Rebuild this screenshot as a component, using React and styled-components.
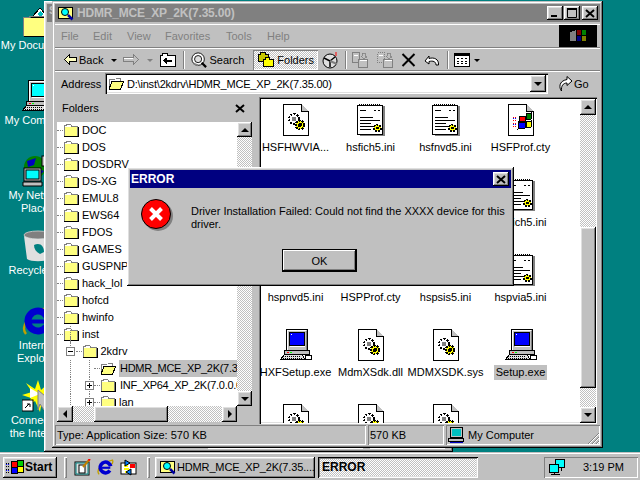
import React from 'react';
import styled, { createGlobalStyle, css } from 'styled-components';

const GlobalStyle = createGlobalStyle`
  html, body {
    margin: 0;
    padding: 0;
    width: 640px;
    height: 480px;
    overflow: hidden;
    background: #008080;
    font-family: "Liberation Sans", Arial, sans-serif;
    font-size: 11px;
    color: #000;
  }
`;

const raised = css`
  background-color: #c0c0c0;
  box-shadow: inset -1px -1px #000, inset 1px 1px #fff, inset -2px -2px #808080, inset 2px 2px #dfdfdf;
`;

const pressed = css`
  box-shadow: inset 1px 1px #000, inset -1px -1px #fff, inset 2px 2px #808080, inset -2px -2px #dfdfdf;
`;

const thinSunken = css`
  box-shadow: inset 1px 1px #808080, inset -1px -1px #fff;
`;

const dither = css`
  background: repeating-conic-gradient(#fff 0 25%, #c0c0c0 0 50%) 0 0 / 2px 2px;
`;

const Screen = styled.div`
  width: 640px;
  height: 480px;
  display: flex;
  flex-direction: column;
  overflow: hidden;
`;

const Desktop = styled.div`
  position: relative;
  height: 452px;
  background: #008080;
  overflow: hidden;
`;

const DesktopIcons = styled.div`
  display: flex;
  flex-direction: column;
  width: 75px;
  padding-top: 5px;
`;

const DesktopItem = styled.div`
  height: 75px;
  display: flex;
  flex-direction: column;
  align-items: center;
  color: #fff;
  text-align: center;
  line-height: 13px;
  svg {
    margin-bottom: 2px;
  }
`;

const BackWindow = styled.div`
  position: absolute;
  left: 44px;
  top: 1px;
  width: 409px;
  height: 451px;
  ${raised}
  padding: 3px;
  box-sizing: border-box;
  display: flex;
  flex-direction: column;
`;

const BackTitle = styled.div`
  height: 18px;
  background: #808080;
  color: #c0c0c0;
  font-weight: bold;
  padding-left: 2px;
`;

const BackStatus = styled.div`
  margin-top: auto;
  height: 4px;
  display: flex;
  padding-left: 161px;
  gap: 7px;
`;

const BackPane = styled.div`
  width: ${p => p.$w}px;
  border-top: 1px solid #000;
  border-bottom: 1px solid #fff;
`;

const Explorer = styled.div`
  position: absolute;
  left: 52px;
  top: 1px;
  width: 551px;
  height: 447px;
  padding: 3px;
  box-sizing: border-box;
  background: #c0c0c0;
  box-shadow: inset -1px -1px #000, inset 1px 1px #c0c0c0, inset -2px -2px #808080, inset 2px 2px #fff;
  display: flex;
  flex-direction: column;
`;

const TitleBar = styled.div`
  height: 18px;
  flex: none;
  display: flex;
  align-items: center;
  background: ${p => (p.$active ? '#000080' : '#808080')};
  color: ${p => (p.$active ? '#fff' : '#c0c0c0')};
  font-weight: bold;
  font-size: 12px;
  padding: 0 2px 0 ${p => (p.$active ? 1 : 3)}px;
  gap: 1px;
`;

const TitleText = styled.span`
  flex: 1;
  white-space: nowrap;
  letter-spacing: ${p => p.$spacing || 0}px;
  padding-left: ${p => p.$pl || 0}px;
`;

const CaptionButton = styled.div`
  ${raised}
  width: 16px;
  height: 14px;
  flex: none;
  margin-left: ${p => p.$ml || 0}px;
  display: flex;
  align-items: center;
  justify-content: center;
  color: #000;
`;

const Band = styled.div`
  height: ${p => p.$h}px;
  flex: none;
  display: flex;
  align-items: center;
  box-sizing: border-box;
  border-top: 1px solid #fff;
  border-bottom: 1px solid #808080;
`;

const MenuBar = styled(Band)`
  margin-top: 2px;
  padding-left: 6px;
`;

const MenuItem = styled.span`
  width: ${p => p.$w}px;
  color: #808080;
`;

const Throbber = styled.div`
  margin-left: auto;
  margin-right: 3px;
  width: 38px;
  height: 22px;
  background: #000;
  display: flex;
  align-items: center;
  justify-content: center;
`;

const ToolBar = styled(Band)`
  padding: 1px 0 0 6px;
`;

const Slot = styled.span`
  display: flex;
  align-items: center;
  flex: none;
  margin-left: ${p => p.$ml || 0}px;
  gap: 2px;
`;

const ToolSep = styled.span`
  width: 2px;
  height: 18px;
  flex: none;
  margin-left: ${p => p.$ml}px;
  box-shadow: inset 1px 0 #808080, inset -1px 0 #fff;
`;

const Caret = styled.span`
  width: 0;
  height: 0;
  flex: none;
  margin-left: ${p => p.$ml}px;
  border-left: 3px solid transparent;
  border-right: 3px solid transparent;
  border-top: 3px solid ${p => p.$color || '#000'};
`;

const FoldersButton = styled.div`
  ${dither}
  margin-left: ${p => p.$ml}px;
  width: 65px;
  height: 20px;
  box-sizing: border-box;
  ${thinSunken}
  flex: none;
  display: flex;
  align-items: center;
  padding-left: 5px;
  gap: 3px;
`;

const AddressBar = styled(Band)`
  padding-left: 6px;
  border-bottom: 0;
`;

const AddressLabel = styled.span`
  width: 44px;
  flex: none;
`;

const AddressField = styled.div`
  width: 443px;
  height: 21px;
  box-sizing: border-box;
  flex: none;
  background: #fff;
  box-shadow: inset 1px 1px #808080, inset 2px 2px #000, inset -1px -1px #fff, inset -2px -2px #dfdfdf;
  display: flex;
  align-items: center;
  padding: 2px 2px 2px 3px;
  gap: 3px;
`;

const AddressText = styled.span`
  flex: 1;
  white-space: nowrap;
  letter-spacing: -0.2px;
`;

const GoButton = styled.div`
  display: flex;
  align-items: center;
  margin-left: 10px;
  gap: 1px;
`;

const Main = styled.div`
  height: 328px;
  flex: none;
  margin-top: 1px;
  display: flex;
`;

const LeftPane = styled.div`
  width: 198px;
  flex: none;
  display: flex;
  flex-direction: column;
  padding: 1px 0 2px 2px;
  box-sizing: border-box;
`;

const PaneHeader = styled.div`
  height: 25px;
  flex: none;
  display: flex;
  align-items: center;
  justify-content: space-between;
  padding: 0 8px 3px 5px;
  box-sizing: border-box;
`;

const TreeArea = styled.div`
  height: 284px;
  flex: none;
  display: flex;
`;

const Tree = styled.div`
  width: 180px;
  flex: none;
  background: #fff;
  overflow: hidden;
`;

const TreeRow = styled.div`
  position: relative;
  height: 17px;
  display: flex;
  align-items: center;
  padding-left: ${p => p.$depth * 18.5}px;
  white-space: nowrap;
`;

const Stub = styled.span`
  width: 6px;
  height: 0;
  flex: none;
  border-top: 1px dotted #808080;
`;

const Guide = styled.span`
  position: absolute;
  left: ${p => p.$x}px;
  top: ${p => (p.$short ? -6 : 0)}px;
  height: ${p => (p.$short ? 15 : 17)}px;
  border-left: 1px dotted #808080;
`;

const Expander = styled.span`
  position: absolute;
  left: ${p => p.$x}px;
  top: 4px;
  width: 7px;
  height: 7px;
  border: 1px solid #808080;
  background:
    linear-gradient(#000, #000) center / 5px 1px no-repeat,
    ${p => (p.$open ? 'none' : 'linear-gradient(#000, #000) center / 1px 5px no-repeat')},
    #fff;
`;

const TreeLabel = styled.span`
  margin-left: ${p => (p.$tight ? 3 : 2)}px;
  padding: 0 1px;
  line-height: 17px;
  flex: ${p => (p.$selected ? 1 : 'none')};
  height: 17px;
  overflow: hidden;
  letter-spacing: ${p => (p.$tight ? -0.3 : 0)}px;
  background: ${p => (p.$selected ? '#c0c0c0' : 'transparent')};
`;

const VScroll = styled.div`
  width: ${p => p.$w || 15}px;
  flex: none;
  display: flex;
  flex-direction: column;
`;

const ScrollButton = styled.div`
  ${raised}
  width: ${p => p.$w || 15}px;
  height: ${p => p.$h || 15}px;
  flex: none;
  display: flex;
  align-items: center;
  justify-content: center;
`;

const Arrow = styled.span`
  width: 0;
  height: 0;
  ${p => p.$dir === 'up' && 'border-left: 4px solid transparent; border-right: 4px solid transparent; border-bottom: 4px solid #000;'}
  ${p => p.$dir === 'down' && 'border-left: 4px solid transparent; border-right: 4px solid transparent; border-top: 4px solid #000;'}
  ${p => p.$dir === 'left' && 'border-top: 4px solid transparent; border-bottom: 4px solid transparent; border-right: 4px solid #000;'}
  ${p => p.$dir === 'right' && 'border-top: 4px solid transparent; border-bottom: 4px solid transparent; border-left: 4px solid #000;'}
`;

const Track = styled.div`
  ${dither}
  flex: ${p => (p.$size ? `0 0 ${p.$size}px` : 1)};
`;

const Thumb = styled.div`
  ${raised}
  flex: 0 0 ${p => p.$size}px;
`;

const HScroll = styled.div`
  height: 16px;
  width: 180px;
  flex: none;
  display: flex;
`;

const RightPane = styled.div`
  width: 338px;
  height: 327px;
  margin: 1px 0 0 6px;
  flex: none;
  display: flex;
  padding: 2px 1px 1px 2px;
  box-sizing: border-box;
  background: #fff;
  box-shadow: inset 1px 1px #808080, inset 2px 2px #000, inset -1px -1px #fff, inset -2px -2px #dfdfdf;
`;

const FileArea = styled.div`
  flex: 1;
  overflow: hidden;
`;

const FileGrid = styled.div`
  display: grid;
  grid-template-columns: repeat(4, 75px);
  grid-auto-rows: 75px;
  margin-left: -3px;
  padding-top: 5px;
`;

const FileCell = styled.div`
  display: flex;
  flex-direction: column;
  align-items: center;
`;

const FileIconBox = styled.div`
  height: 32px;
  display: flex;
  justify-content: center;
`;

const FileLabel = styled.span`
  margin-top: 4px;
  padding: 0 2px;
  line-height: 15px;
  white-space: nowrap;
  background: ${p => (p.$selected ? '#c0c0c0' : 'transparent')};
`;

const StatusBar = styled.div`
  height: 20px;
  flex: none;
  margin-top: 1px;
  display: flex;
  gap: 2px;
`;

const StatusPane = styled.div`
  ${thinSunken}
  width: ${p => p.$w}px;
  flex: ${p => (p.$grow ? 1 : 'none')};
  box-sizing: border-box;
  display: flex;
  align-items: center;
  padding-left: ${p => p.$pl || 2}px;
  gap: 4px;
  position: relative;
  white-space: nowrap;
`;

const Grip = styled.svg`
  position: absolute;
  right: 0;
  bottom: 0;
`;

const Dialog = styled.div`
  position: absolute;
  left: 127px;
  top: 167px;
  width: 387px;
  height: 119px;
  padding: 3px;
  box-sizing: border-box;
  ${raised}
  display: flex;
  flex-direction: column;
`;

const DialogBody = styled.div`
  display: flex;
  padding: 11px 0 0 11px;
  height: 61px;
  box-sizing: border-box;
`;

const DialogText = styled.div`
  width: 318px;
  margin: 6px 0 0 18px;
  line-height: 13px;
`;

const DialogActions = styled.div`
  display: flex;
  justify-content: center;
  margin-left: -2px;
`;

const OkButton = styled.div`
  width: 75px;
  height: 23px;
  background: #c0c0c0;
  outline: 1px solid #000;
  outline-offset: -1px;
  box-shadow: inset -2px -2px #000, inset 2px 2px #fff, inset -3px -3px #808080;
  display: flex;
  align-items: center;
  justify-content: center;
`;

const Taskbar = styled.div`
  height: 28px;
  flex: none;
  background: #c0c0c0;
  border-top: 1px solid #c0c0c0;
  box-shadow: inset 0 1px #fff;
  box-sizing: border-box;
  display: flex;
  align-items: flex-start;
  padding: 4px 2px 0 3px;
`;

const StartButton = styled.div`
  ${raised}
  width: 54px;
  height: 21px;
  flex: none;
  display: flex;
  align-items: center;
  padding: 0 0 1px 2px;
  box-sizing: border-box;
  font-weight: bold;
  font-size: 12px;
`;

const TaskSep = styled.span`
  width: 3px;
  height: 21px;
  flex: none;
  margin-left: ${p => p.$ml}px;
  box-shadow: inset 1px 1px #fff, inset -1px -1px #808080;
`;

const QuickIcon = styled.span`
  display: flex;
  flex: none;
  margin: 2px 0 0 ${p => p.$ml}px;
`;

const TaskButton = styled.div`
  ${p => (p.$active ? dither : raised)}
  ${p => p.$active && pressed}
  width: 160px;
  height: 21px;
  flex: none;
  margin-left: ${p => p.$ml}px;
  box-sizing: border-box;
  display: flex;
  align-items: center;
  padding: 0 0 1px ${p => (p.$active ? 4 : 5)}px;
  gap: 1px;
  font-size: ${p => (p.$active ? 12 : 11)}px;
  font-weight: ${p => (p.$active ? 'bold' : 'normal')};
  letter-spacing: ${p => (p.$active ? 0 : -0.15)}px;
  white-space: nowrap;
`;

const Tray = styled.div`
  ${thinSunken}
  width: 94px;
  height: 21px;
  flex: none;
  margin-left: auto;
  display: flex;
  align-items: center;
  padding: 0 0 1px 5px;
  box-sizing: border-box;
`;

const Clock = styled.span`
  margin-left: 18px;
`;

const Px = styled.svg`
  display: block;
  flex: none;
  shape-rendering: crispEdges;
`;

const Icon = ({ w, h, children }) => (
  <Px width={w} height={h} viewBox={`0 0 ${w} ${h}`}>{children}</Px>
);

const folderYellow = '#ffff80';

const FolderIcon = () => (
  <Icon w={16} h={15}>
    <rect x="2" y="4" width="12" height="9" fill={folderYellow} />
    <path d="M1.5 13V2.5H3V1.5H7.5L8.5 3H14M14.5 3V13" fill="none" stroke="#808080" />
    <path d="M1 13.5H15.5M15.5 4V13" stroke="#000" fill="none" />
    <rect x="2" y="3" width="5" height="1" fill="#fff" />
  </Icon>
);

const OpenFolderIcon = () => (
  <Icon w={16} h={15}>
    <path d="M2 3H12V6H2Z" fill="#fff" />
    <path d="M4 6H15L12 13H1Z" fill={folderYellow} />
    <path d="M1.5 13V3H7M7.5 2.5H12.5V5" fill="none" stroke="#808080" />
    <path d="M1 13.5H12.5L15.5 5.5H4L1 13" fill="none" stroke="#000" />
  </Icon>
);

const Gears = ({ x = 0, y = 0 }) => (
  <g transform={`translate(${x} ${y})`}>
    <circle cx="6" cy="6" r="5" fill="#fff" stroke="#000" strokeWidth="2" strokeDasharray="2 1.2" />
    <circle cx="6" cy="6" r="2.5" fill="#808080" />
    <circle cx="12" cy="12" r="4.5" fill="#ffff00" stroke="#000" strokeWidth="2" strokeDasharray="2 1.2" />
    <circle cx="12" cy="12" r="2" fill="#000" />
  </g>
);

const GearFileIcon = () => (
  <Icon w={26} h={32}>
    <path d="M.5 .5H18.5L25.5 7.5V31.5H.5Z" fill="#fff" stroke="#000" />
    <path d="M18.5 .5V7.5H25.5" fill="#c0c0c0" stroke="#000" />
    <Gears x={5} y={9} />
  </Icon>
);

const IniIcon = () => (
  <Icon w={28} h={32}>
    <rect x="3" y="2" width="25" height="30" fill="#808080" />
    <rect x=".5" y="1.5" width="25" height="29" fill="#fff" stroke="#000" />
    <path d="M2 .5H24" stroke="#000" strokeDasharray="1 1" />
    <path d="M3 6.5H9M17 6.5H19M21 6.5H23M3 13.5H16M3 16.5H23M3 19.5H14M3 22.5H17M3 25.5H14" stroke="#000" />
    <circle cx="20.5" cy="24" r="3.5" fill="#ffff00" stroke="#000" strokeWidth="2" strokeDasharray="2 1" />
    <circle cx="20.5" cy="24" r="1.2" fill="#000" />
  </Icon>
);

const CtyIcon = () => (
  <Icon w={26} h={32}>
    <path d="M.5 .5H18.5L25.5 7.5V31.5H.5Z" fill="#fff" stroke="#000" />
    <path d="M18.5 .5V7.5H25.5" fill="#c0c0c0" stroke="#000" />
    <path d="M12 12H17V17H11Z" fill="#f00" stroke="#000" />
    <path d="M18 10L23 9V15L18 16Z" fill="#008000" stroke="#000" />
    <path d="M11 18H17V24L10 25Z" fill="#00f" stroke="#000" />
    <path d="M18 18L23 17V23L18 24Z" fill="#ff0" stroke="#000" />
    <path d="M5 13H9M5 16H9M5 19H9M5 22H9" stroke="#f00" strokeDasharray="1 1" />
    <path d="M5 14H9M5 20H9" stroke="#00f" strokeDasharray="1 1" />
  </Icon>
);

const ComputerIcon = ({ screen = '#0000ff' }) => (
  <Icon w={32} h={32}>
    <rect x="6.5" y=".5" width="21" height="21" fill="#c0c0c0" stroke="#000" />
    <path d="M7.5 20.5V1.5H26" stroke="#fff" fill="none" />
    <path d="M26.5 2V21" stroke="#808080" />
    <rect x="9.5" y="3.5" width="15" height="13" fill={screen} stroke="#000" />
    <path d="M10 17.5H25" stroke="#fff" />
    <rect x="11" y="5" width="1" height="1" fill="#fff" />
    <path d="M4.5 21.5H29.5V25.5H4.5Z" fill="#c0c0c0" stroke="#000" />
    <rect x="7" y="23" width="2" height="1" fill="#f00" />
    <rect x="10" y="23" width="2" height="1" fill="#0f0" />
    <path d="M.5 30.5L4.5 25.5H22.5L24.5 30.5Z" fill="#dfdfdf" stroke="#000" />
    <path d="M5 27.5H21M3 29.5H22" stroke="#000" strokeDasharray="1 1" />
    <rect x="25.5" y="26.5" width="6" height="4" fill="#fff" stroke="#000" />
  </Icon>
);

const BackIcon = () => (
  <Icon w={13} h={12}>
    <path d="M5.5 .5L.5 5.5L5.5 10.5V7.5H12.5V3.5H5.5Z" fill="#ffffc0" stroke="#000" />
  </Icon>
);

const ForwardIcon = () => (
  <Icon w={16} h={12}>
    <path d="M10.5 .5L15.5 5.5L10.5 10.5V7.5H.5V3.5H10.5Z" fill="#c0c0c0" stroke="#808080" />
    <path d="M1 4.5H10" stroke="#fff" />
  </Icon>
);

const UpIcon = () => (
  <Icon w={16} h={14}>
    <path d="M.5 13.5V2.5H2V.5H7V2.5H15.5V13.5Z" fill="#fff" stroke="#000" />
    <path d="M3 7.5L6.5 4.5V6.5H12V8.5H6.5V10.5Z" fill="#000" />
  </Icon>
);

const SearchIcon = () => (
  <svg width="16" height="16" viewBox="0 0 18 18">
    <circle cx="8" cy="8" r="7" fill="#fff" stroke="#000" />
    <circle cx="8" cy="8" r="4" fill="#dfdfdf" stroke="#000" />
    <path d="M12 12L17 17" stroke="#000" strokeWidth="2.5" />
    <path d="M3 13L8 15" stroke="#808080" strokeWidth="2" />
  </svg>
);

const FoldersToolIcon = () => (
  <Icon w={16} h={16}>
    <path d="M.5 2.5H2V.5H7V2.5H10.5V9.5H.5Z" fill="#c8c800" stroke="#000" />
    <path d="M5.5 7.5H7V5.5H11V7.5H15.5V14.5H5.5Z" fill="#ffff00" stroke="#000" />
  </Icon>
);

const HistoryIcon = () => (
  <svg width="17" height="17" viewBox="0 0 17 17">
    <circle cx="8" cy="9" r="7" fill="#dfdfdf" stroke="#000" />
    <path d="M8 9L2 6M8 9L13 5M8 9L8 15" stroke="#000" strokeWidth="1.5" />
    <path d="M14 0V4" stroke="#f00" />
    <path d="M8 9L15 12" stroke="#808080" strokeWidth="2" />
  </svg>
);

const DocPairIcon = ({ flip }) => (
  <Icon w={16} h={16}>
    <path d="M.5 .5H7.5V10.5H.5Z" fill="#c0c0c0" stroke="#808080" strokeDasharray={flip ? '1 1' : '0'} />
    <path d="M6.5 7.5H15.5V15.5H6.5Z" fill="#c0c0c0" stroke="#808080" />
    <path d="M7.5 8.5H15M2 3H6" stroke="#fff" />
    <path d="M10 1H13V4H15L11.5 6.5L9 4H10Z" fill="#c0c0c0" stroke="#808080" strokeWidth=".8" />
  </Icon>
);

const DeleteIcon = () => (
  <svg width="15" height="14" viewBox="0 0 15 14">
    <path d="M1.5 1L13.5 13M13.5 1L1.5 13" stroke="#000" strokeWidth="2" />
  </svg>
);

const UndoIcon = () => (
  <svg width="16" height="12" viewBox="0 0 16 12">
    <path d="M1 7L5 2V4.5C10 3 15 5 14.5 11H12C12 7.5 9 6.5 5 7.5V10Z" fill="#fff" stroke="#000" />
  </svg>
);

const ViewsIcon = () => (
  <Icon w={16} h={14}>
    <rect x=".5" y=".5" width="15" height="13" fill="#fff" stroke="#000" />
    <rect x="1" y="1" width="14" height="2" fill="#000" />
    <path d="M3 5.5H5M7 5.5H9M11 5.5H13M3 8H5M7 8H9M11 8H13M3 10.5H5M7 10.5H9M11 10.5H13" stroke="#000" />
  </Icon>
);

const GoIcon = () => (
  <svg width="15" height="16" viewBox="0 0 15 16">
    <path d="M9 .5L14 5L9 9.5V7C5 7 3 10 3.5 15C1 12 .5 5 9 3.5Z" fill="#fff" stroke="#000" />
  </svg>
);

const SearchFolderIcon = () => (
  <Icon w={16} h={16}>
    <path d="M.5 2.5H14.5V13.5H.5Z" fill={folderYellow} stroke="#000" />
    <circle cx="7" cy="7" r="3.5" fill="#00ffff" stroke="#000" shapeRendering="auto" />
    <path d="M10 10L14.5 14.5" stroke="#0000a0" strokeWidth="2.5" shapeRendering="auto" />
  </Icon>
);

const ThrobberFlag = () => (
  <Icon w={17} h={14}>
    <path d="M0 3L6 1V12L0 12Z" fill="#808080" />
    <rect x="7" y="1" width="4" height="5" fill="#800000" />
    <rect x="12" y="1" width="4" height="5" fill="#008000" />
    <rect x="7" y="7" width="4" height="5" fill="#000080" />
    <rect x="12" y="7" width="4" height="5" fill="#808000" />
  </Icon>
);

const ErrorIcon = () => (
  <svg width="32" height="32" viewBox="0 0 32 32">
    <circle cx="17" cy="17" r="15" fill="#808080" />
    <circle cx="15" cy="15" r="14.5" fill="#ff0000" stroke="#000" />
    <path d="M9.5 9.5L20.5 20.5M20.5 9.5L9.5 20.5" stroke="#fff" strokeWidth="4" />
  </svg>
);

const WinFlag = () => (
  <Icon w={20} h={16}>
    <path d="M1 4H5M1 7H5M1 10H5M1 13H5" stroke="#000" strokeDasharray="1 1" />
    <path d="M1 5H5M1 11H5" stroke="#00f" strokeDasharray="1 1" />
    <path d="M6 2H12V8H6Z" fill="#f00" stroke="#000" />
    <path d="M12 1H18V7H12Z" fill="#0c0" stroke="#000" />
    <path d="M6 8H12V14H6Z" fill="#00f" stroke="#000" />
    <path d="M12 7H18V13H12Z" fill="#ff0" stroke="#000" />
  </Icon>
);

const ShowDesktopIcon = () => (
  <svg width="17" height="17" viewBox="0 0 17 17">
    <rect x="1" y="3" width="14" height="13" fill="#fff" stroke="#000" />
    <rect x="2" y="4" width="12" height="11" fill="#dfdfdf" stroke="#008080" />
    <rect x="5" y="6" width="6" height="8" fill="#fff" stroke="#000" />
    <path d="M9 8L15 1" stroke="#c08000" strokeWidth="2" />
    <path d="M14.5 1.5L16 0" stroke="#f00" strokeWidth="2" />
  </svg>
);

const IeIcon = ({ size = 17 }) => (
  <svg width={size} height={size} viewBox="0 0 32 32">
    <path d="M4 29C-2 22 6 7 29 2C31 6 29 9 26 11" fill="none" stroke="#c0a000" strokeWidth="2.5" />
    <circle cx="16" cy="16" r="10" fill="none" stroke="#0000d0" strokeWidth="7" strokeDasharray="53 10" transform="rotate(35 16 16)" />
    <rect x="9" y="14.5" width="16" height="4" fill="#0000d0" />
  </svg>
);

const ChannelIcon = () => (
  <svg width="17" height="17" viewBox="0 0 17 17">
    <rect x="1" y="4" width="15" height="11" fill="#fff" stroke="#000" />
    <rect x="10" y="5" width="5" height="4" fill="#f00" />
    <path d="M4 7H8M4 10H9M5 13H11" stroke="#ff0" strokeWidth="2" />
    <path d="M5 1L10 4L5 7Z" fill="#0080ff" stroke="#000" />
    <path d="M11 16L6 13L11 10Z" fill="#0080ff" stroke="#000" />
  </svg>
);

const TrayNetIcon = () => (
  <Icon w={16} h={16}>
    <rect x="6.5" y=".5" width="9" height="8" fill="#00ffff" stroke="#000" />
    <rect x=".5" y="5.5" width="9" height="8" fill="#00ffff" stroke="#000" />
    <path d="M2 15.5H11M5 14V15M12 9V12" stroke="#000" />
  </Icon>
);

const MyComputerSmall = () => (
  <Icon w={16} h={16}>
    <rect x="2.5" y=".5" width="12" height="10" fill="#c0c0c0" stroke="#000" />
    <rect x="4" y="2" width="9" height="7" fill="#00c0c0" />
    <rect x=".5" y="11.5" width="15" height="3" fill="#c0c0c0" stroke="#000" />
    <path d="M2 15.5H15" stroke="#0000c0" />
  </Icon>
);

const MyDocsIcon = () => (
  <Icon w={32} h={32}>
    <path d="M10 12L18 3L26 12Z" fill="#fff" stroke="#000" />
    <path d="M15 9L18 6L21 9L18 12Z" fill="#00c0c0" />
    <rect x="2" y="13" width="30" height="18" fill={folderYellow} />
    <path d="M1.5 31V12.5H7L9 11H32" fill="none" stroke="#808080" />
    <path d="M2 31.5H32" stroke="#000" />
  </Icon>
);

const NetworkIcon = () => (
  <svg width="32" height="32" viewBox="0 0 32 32">
    <circle cx="13" cy="12" r="11" fill="#008000" />
    <path d="M5 6L14 3L12 10L6 12ZM16 14L22 16L16 22Z" fill="#0000c0" />
    <rect x="20" y="1" width="10" height="10" fill="#c0c0c0" stroke="#000" />
    <rect x="2" y="13" width="17" height="13" fill="#c0c0c0" stroke="#000" />
    <rect x="4" y="15" width="13" height="9" fill="#00ffff" stroke="#000" />
    <path d="M1 27H20V31H1Z" fill="#c0c0c0" stroke="#000" />
  </svg>
);

const RecycleIcon = () => (
  <svg width="32" height="32" viewBox="0 0 32 32">
    <ellipse cx="16" cy="5" rx="14" ry="4" fill="#808080" stroke="#c0c0c0" />
    <path d="M2 6L5 29C9 32 23 32 27 29L30 6C24 10 8 10 2 6Z" fill="#dfdfdf" />
    <path d="M12 15C18 12 22 16 22 22L18 24C14 22 12 19 12 15Z" fill="#008080" />
  </svg>
);

const ConnectIcon = () => (
  <svg width="32" height="32" viewBox="0 0 32 32">
    <path d="M16 0L19 10L28 2L23 12L32 14L23 17L30 26L20 21L18 32L13 21L3 28L9 18L0 15L10 12L4 3L13 9Z" fill="#ffff00" />
    <path d="M8 8L18 14L8 18Z" fill="#fff" />
    <path d="M16 10L30 22L24 24L28 30H22L18 24L16 30Z" fill="#c0c0c0" stroke="#808080" />
    <rect x="0" y="20" width="11" height="11" fill="#fff" stroke="#000" />
    <path d="M3 28L7 24M5 24H8V27" stroke="#000" fill="none" />
  </svg>
);

const desktopItems = [
  { icon: <MyDocsIcon />, lines: ['My Documents'] },
  { icon: <ComputerIcon screen="#00ffff" />, lines: ['My Computer'] },
  { icon: <NetworkIcon />, lines: ['My Network', 'Places'] },
  { icon: <RecycleIcon />, lines: ['Recycle Bin'] },
  { icon: <IeIcon size={32} />, lines: ['Internet', 'Explorer'] },
  { icon: <ConnectIcon />, lines: ['Connect to', 'the Internet'] },
];

const topFolders = ['DOC', 'DOS', 'DOSDRV', 'DS-XG', 'EMUL8', 'EWS64', 'FDOS', 'GAMES', 'GUSPNP', 'hack_lol', 'hofcd', 'hwinfo', 'inst'];

const files = [
  ['gear', 'HSFHWVIA...'], ['ini', 'hsfich5.ini'], ['ini', 'hsfnvd5.ini'], ['cty', 'HSFProf.cty'],
  ['ini', 'hsfsis5.ini'], ['ini', 'hsfvia5.ini'], ['gear', 'HSPHWVIA...'], ['ini', 'hspich5.ini'],
  ['ini', 'hspnvd5.ini'], ['cty', 'HSPProf.cty'], ['ini', 'hspsis5.ini'], ['ini', 'hspvia5.ini'],
  ['exe', 'HXFSetup.exe'], ['gear', 'MdmXSdk.dll'], ['gear', 'MDMXSDK.sys'], ['exe', 'Setup.exe', true],
  ['gear', 'mdmxsdk.inf'], ['gear', 'mdmxsdk.cat'], ['gear', 'mdmxsdk.vxd'],
];

const fileIcons = {
  gear: <GearFileIcon />,
  ini: <IniIcon />,
  cty: <CtyIcon />,
  exe: <ComputerIcon />,
};

const App = () => (
  <Screen>
    <GlobalStyle />
    <Desktop>
      <DesktopIcons>
        {desktopItems.map(item => (
          <DesktopItem key={item.lines[0]}>
            {item.icon}
            {item.lines.map(line => <span key={line}>{line}</span>)}
          </DesktopItem>
        ))}
      </DesktopIcons>

      <BackWindow>
        <BackTitle>S</BackTitle>
        <BackStatus>
          <BackPane $w={155} />
          <BackPane $w={75} />
        </BackStatus>
      </BackWindow>

      <Explorer>
        <TitleBar>
          <SearchFolderIcon />
          <TitleText $spacing={-0.2} $pl={2}>HDMR_MCE_XP_2K(7.35.00)</TitleText>
          <CaptionButton>
            <svg width="8" height="8"><rect x="0" y="6" width="6" height="2" fill="#000" /></svg>
          </CaptionButton>
          <CaptionButton>
            <svg width="10" height="10"><path d="M.5 1.5H9.5V9.5H.5Z" fill="none" stroke="#000" /><rect width="10" height="2" fill="#000" /></svg>
          </CaptionButton>
          <CaptionButton $ml={1}>
            <svg width="10" height="9"><path d="M1 1L9 8M9 1L1 8" stroke="#000" strokeWidth="2" /></svg>
          </CaptionButton>
        </TitleBar>

        <MenuBar $h={24}>
          <MenuItem $w={32}>File</MenuItem>
          <MenuItem $w={34}>Edit</MenuItem>
          <MenuItem $w={38}>View</MenuItem>
          <MenuItem $w={61}>Favorites</MenuItem>
          <MenuItem $w={41}>Tools</MenuItem>
          <MenuItem $w={30}>Help</MenuItem>
          <Throbber><ThrobberFlag /></Throbber>
        </MenuBar>

        <ToolBar $h={23}>
          <Slot $ml={3}><BackIcon />Back</Slot>
          <Caret $ml={8} />
          <Slot $ml={6}><ForwardIcon /></Slot>
          <Caret $ml={8} $color="#808080" />
          <Slot $ml={7}><UpIcon /></Slot>
          <ToolSep $ml={7} />
          <Slot $ml={6}><SearchIcon />Search</Slot>
          <FoldersButton $ml={9}><FoldersToolIcon />Folders</FoldersButton>
          <Slot $ml={4}><HistoryIcon /></Slot>
          <ToolSep $ml={6} />
          <Slot $ml={5}><DocPairIcon /></Slot>
          <Slot $ml={9}><DocPairIcon flip /></Slot>
          <Slot $ml={8}><DeleteIcon /></Slot>
          <Slot $ml={8}><UndoIcon /></Slot>
          <ToolSep $ml={7} />
          <Slot $ml={5}><ViewsIcon /></Slot>
          <Caret $ml={4} />
        </ToolBar>

        <AddressBar $h={24}>
          <AddressLabel>Address</AddressLabel>
          <AddressField>
            <OpenFolderIcon />
            <AddressText>D:\inst\2kdrv\HDMR_MCE_XP_2K(7.35.00)</AddressText>
            <ScrollButton $w={16} $h={17}><Arrow $dir="down" /></ScrollButton>
          </AddressField>
          <GoButton><GoIcon />Go</GoButton>
        </AddressBar>

        <Main>
          <LeftPane>
            <PaneHeader>
              Folders
              <svg width="10" height="9"><path d="M1 1L9 8M9 1L1 8" stroke="#000" strokeWidth="2" /></svg>
            </PaneHeader>
            <TreeArea>
              <Tree>
                {topFolders.map(name => (
                  <TreeRow key={name} $depth={0}>
                    {name === 'inst' && <Guide $x={13} />}
                    <Stub /><FolderIcon /><TreeLabel>{name}</TreeLabel>
                  </TreeRow>
                ))}
                <TreeRow $depth={1}>
                  <Guide $x={13} $short />
                  <Expander $x={9} $open />
                  <Stub /><FolderIcon /><TreeLabel>2kdrv</TreeLabel>
                </TreeRow>
                <TreeRow $depth={2}>
                  <Guide $x={13} />
                  <Guide $x={32} />
                  <Stub /><OpenFolderIcon /><TreeLabel $selected $tight>HDMR_MCE_XP_2K(7.35.00)</TreeLabel>
                </TreeRow>
                <TreeRow $depth={2}>
                  <Guide $x={13} />
                  <Guide $x={32} />
                  <Expander $x={28} />
                  <Stub /><FolderIcon /><TreeLabel $tight>INF_XP64_XP_2K(7.0.0.0)</TreeLabel>
                </TreeRow>
                <TreeRow $depth={2}>
                  <Guide $x={13} />
                  <Guide $x={32} />
                  <Expander $x={28} />
                  <Stub /><FolderIcon /><TreeLabel>lan</TreeLabel>
                </TreeRow>
              </Tree>
              <VScroll>
                <ScrollButton><Arrow $dir="up" /></ScrollButton>
                <Track />
                <ScrollButton><Arrow $dir="down" /></ScrollButton>
              </VScroll>
            </TreeArea>
            <HScroll>
              <ScrollButton $w={16} $h={16}><Arrow $dir="left" /></ScrollButton>
              <Track $size={21} />
              <Thumb $size={74} />
              <Track />
              <ScrollButton $w={15} $h={16}><Arrow $dir="right" /></ScrollButton>
            </HScroll>
          </LeftPane>

          <RightPane>
            <FileArea>
              <FileGrid>
                {files.map(([kind, name, selected]) => (
                  <FileCell key={name}>
                    <FileIconBox>{fileIcons[kind]}</FileIconBox>
                    <FileLabel $selected={selected}>{name}</FileLabel>
                  </FileCell>
                ))}
              </FileGrid>
            </FileArea>
            <VScroll $w={16}>
              <ScrollButton $w={16} $h={16}><Arrow $dir="up" /></ScrollButton>
              <Track $size={112} />
              <Thumb $size={161} />
              <Track />
              <ScrollButton $w={16} $h={16}><Arrow $dir="down" /></ScrollButton>
            </VScroll>
          </RightPane>
        </Main>

        <StatusBar>
          <StatusPane $w={311}>Type: Application Size: 570 KB</StatusPane>
          <StatusPane $w={76}>570 KB</StatusPane>
          <StatusPane $grow>
            <MyComputerSmall />My Computer
            <Grip width="13" height="13" viewBox="0 0 13 13">
              <path d="M12 1L1 12M12 5L5 12M12 9L9 12" stroke="#808080" fill="none" />
              <path d="M12 2L2 12M12 6L6 12M12 10L10 12" stroke="#fff" fill="none" />
            </Grip>
          </StatusPane>
        </StatusBar>
      </Explorer>

      <Dialog>
        <TitleBar $active>
          <TitleText>ERROR</TitleText>
          <CaptionButton>
            <svg width="10" height="9"><path d="M1 1L9 8M9 1L1 8" stroke="#000" strokeWidth="2" /></svg>
          </CaptionButton>
        </TitleBar>
        <DialogBody>
          <ErrorIcon />
          <DialogText>Driver Installation Failed: Could not find the XXXX device for this driver.</DialogText>
        </DialogBody>
        <DialogActions>
          <OkButton>OK</OkButton>
        </DialogActions>
      </Dialog>
    </Desktop>

    <Taskbar>
      <StartButton><WinFlag />Start</StartButton>
      <TaskSep $ml={7} />
      <QuickIcon $ml={7}><ShowDesktopIcon /></QuickIcon>
      <QuickIcon $ml={6}><IeIcon /></QuickIcon>
      <QuickIcon $ml={6}><ChannelIcon /></QuickIcon>
      <TaskSep $ml={10} />
      <TaskButton $ml={5}><SearchFolderIcon />HDMR_MCE_XP_2K(7.35....</TaskButton>
      <TaskButton $ml={3} $active>ERROR</TaskButton>
      <Tray><TrayNetIcon /><Clock>3:19 PM</Clock></Tray>
    </Taskbar>
  </Screen>
);

export default App;
